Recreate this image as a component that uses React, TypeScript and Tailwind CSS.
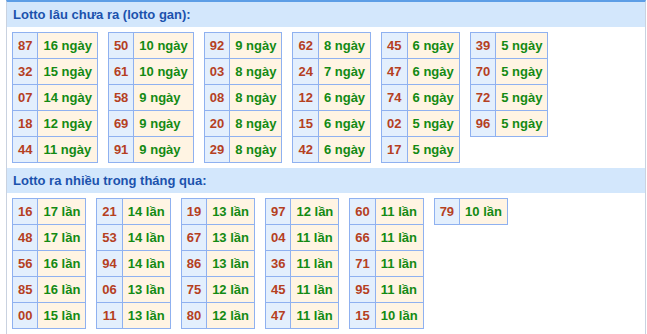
const gan: [string, string][][] = [
  [["87", "16 ngày"], ["32", "15 ngày"], ["07", "14 ngày"], ["18", "12 ngày"], ["44", "11 ngày"]],
  [["50", "10 ngày"], ["61", "10 ngày"], ["58", "9 ngày"], ["69", "9 ngày"], ["91", "9 ngày"]],
  [["92", "9 ngày"], ["03", "8 ngày"], ["08", "8 ngày"], ["20", "8 ngày"], ["29", "8 ngày"]],
  [["62", "8 ngày"], ["24", "7 ngày"], ["12", "6 ngày"], ["15", "6 ngày"], ["42", "6 ngày"]],
  [["45", "6 ngày"], ["47", "6 ngày"], ["74", "6 ngày"], ["02", "5 ngày"], ["17", "5 ngày"]],
  [["39", "5 ngày"], ["70", "5 ngày"], ["72", "5 ngày"], ["96", "5 ngày"]],
];

const nhieu: [string, string][][] = [
  [["16", "17 lần"], ["48", "17 lần"], ["56", "16 lần"], ["85", "16 lần"], ["00", "15 lần"]],
  [["21", "14 lần"], ["53", "14 lần"], ["94", "14 lần"], ["06", "13 lần"], ["11", "13 lần"]],
  [["19", "13 lần"], ["67", "13 lần"], ["86", "13 lần"], ["75", "12 lần"], ["80", "12 lần"]],
  [["97", "12 lần"], ["04", "11 lần"], ["36", "11 lần"], ["45", "11 lần"], ["47", "11 lần"]],
  [["60", "11 lần"], ["66", "11 lần"], ["71", "11 lần"], ["95", "11 lần"], ["15", "10 lần"]],
  [["79", "10 lần"]],
];

function LotoTable({ rows }: { rows: [string, string][] }) {
  return (
    <table className="border-collapse">
      <tbody>
        {rows.map(([num, val]) => (
          <tr key={num}>
            <td className="h-[26px] border border-[#8fb1f0] bg-[#e3effd] px-[5px] text-center text-[#b5401f]">{num}</td>
            <td className="h-[26px] border border-[#8fb1f0] bg-[#fff4e3] px-[5px] text-[#138a13]">{val}</td>
          </tr>
        ))}
      </tbody>
    </table>
  );
}

function Section({ title, tables }: { title: string; tables: [string, string][][] }) {
  return (
    <>
      <div className="flex h-[25px] items-center bg-[#d3e7fc] px-[6px] text-[#1b52ad]">{title}</div>
      <div className="flex items-start gap-[10px] px-[5px] py-[5px]">
        {tables.map((t, i) => (
          <LotoTable key={i} rows={t} />
        ))}
      </div>
    </>
  );
}

export default function App() {
  return (
    <div className="min-h-screen bg-white font-['Liberation_Sans',Arial,sans-serif] text-[13px] font-bold leading-[15px]">
      <div className="ml-[6px] min-h-[334px] w-[640px] border-x border-t-2 border-x-[#c9d2e0] border-t-[#5d9ee6]">
        <Section title="Lotto lâu chưa ra (lotto gan):" tables={gan} />
        <Section title="Lotto ra nhiều trong tháng qua:" tables={nhieu} />
      </div>
    </div>
  );
}
